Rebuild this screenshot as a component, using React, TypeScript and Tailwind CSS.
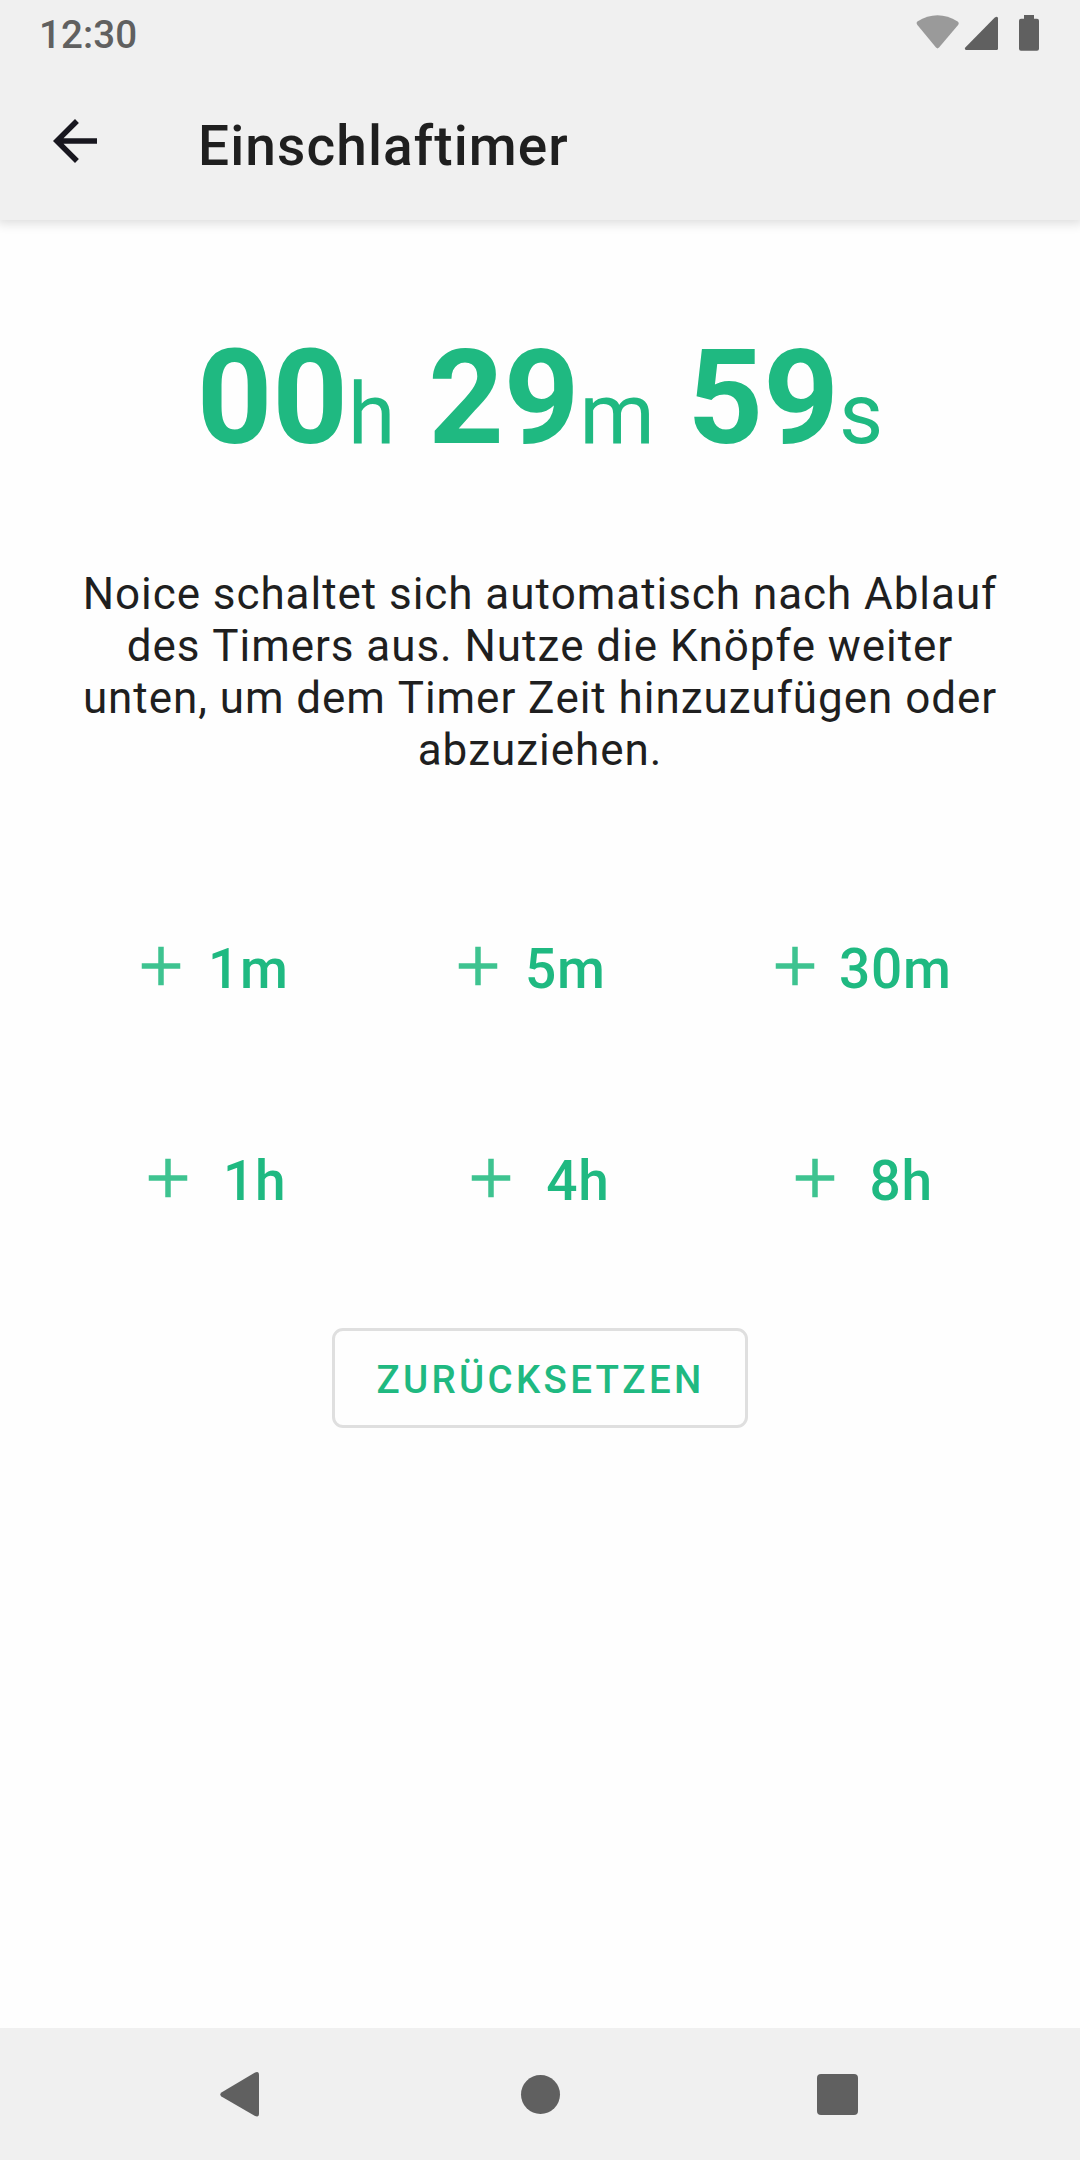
const ROWS = [
  {
    cls: "pl-[128px]",
    cell: "w-[317px]",
    items: [
      { label: "1m", gap: "pl-[14px]" },
      { label: "5m", gap: "pl-[14px]" },
      { label: "30m", gap: "pl-[11px]" },
    ],
  },
  {
    cls: "pl-[135px]",
    cell: "w-[323.3px]",
    items: [
      { label: "1h", gap: "pl-[22px]" },
      { label: "4h", gap: "pl-[22px]" },
      { label: "8h", gap: "pl-[22px]" },
    ],
  },
];

function StatusBar() {
  return (
    <div className="flex h-[66px] items-start justify-between pl-[39px] text-[#606060]">
      <span className="mt-[12px] text-[38.5px] leading-[46px] font-medium tracking-[0.1px]">12:30</span>
      <svg className="h-[66px] w-[180px]" viewBox="900 0 180 66" fill="currentColor">
        <path
          d="M917.3 21.4Q937.5 9.3 957.7 21.4Q959.6 22.8 958.3 24.8L939 47.6Q937.5 49.2 936 47.6L917.2 24.8Q915.8 22.8 917.3 21.4Z"
          fill="#9a9a9a"
        />
        <path d="M965.3 47.6L994.8 17.6Q998 15.6 998 18.6V48.5Q998 50 996.5 50H966Q964 49.6 965.3 47.6Z" />
        <path d="M1024 15H1034V18.7H1037Q1039 18.7 1039 20.7V48.8Q1039 50.8 1037 50.8H1021Q1019 50.8 1019 48.8V20.7Q1019 18.7 1021 18.7H1024Z" />
      </svg>
    </div>
  );
}

function PlusIcon() {
  return (
    <svg className="h-[66px] w-[66px] shrink-0" viewBox="0 0 24 24" fill="#3ec390">
      <path d="M19 13h-6v6h-2v-6H5v-2h6V5h2v6h6v2z" />
    </svg>
  );
}

function TimePart({ value, unit }: { value: string; unit: string }) {
  return (
    <>
      <span className="font-bold">{value}</span>
      <span className="text-[85.8px]">{unit}</span>
    </>
  );
}

export default function App() {
  return (
    <div className="flex h-[2160px] w-[1080px] flex-col overflow-hidden bg-[#fefefe] font-['Roboto',sans-serif] text-[#1f1f1f]">
      <header className="z-10 h-[220px] shrink-0 bg-[#f0f0f0] shadow-[0_0_11px_3px_rgba(0,0,0,0.14)]">
        <StatusBar />
        <div className="flex h-[154px] items-start pl-[42px]">
          <svg className="mt-[42px] h-[66px] w-[66px]" viewBox="0 0 24 24" fill="#18171f">
            <path d="M20 11H7.83l5.59-5.59L12 4l-8 8 8 8 1.41-1.41L7.83 13H20v-2z" />
          </svg>
          <h1 className="mt-[48px] ml-[90px] text-[55px] leading-[64px] font-medium tracking-[1.1px]">
            Einschlaftimer
          </h1>
        </div>
      </header>

      <main className="flex grow flex-col items-center">
        <div className="mt-[100px] h-[156px] text-[132px] leading-[156px] whitespace-nowrap text-[#1fb981]">
          <TimePart value="00" unit="h" /> <TimePart value="29" unit="m" />{" "}
          <TimePart value="59" unit="s" />
        </div>

        <p className="mt-[92px] text-center text-[44px] leading-[52px] tracking-[0.95px] [font-kerning:none]">
          Noice schaltet sich automatisch nach Ablauf
          <br />
          des Timers aus. Nutze die Knöpfe weiter
          <br />
          unten, um dem Timer Zeit hinzuzufügen oder
          <br />
          abzuziehen.
        </p>

        <div className="mt-[157px] flex w-full flex-col gap-[146px]">
          {ROWS.map((row) => (
            <div key={row.cls} className={`flex ${row.cls}`}>
              {row.items.map((item) => (
                <button key={item.label} className={`flex h-[66px] shrink-0 items-center ${row.cell}`}>
                  <PlusIcon />
                  <span
                    className={`pt-[6px] text-[55px] leading-[64px] font-medium tracking-[0.0125em] text-[#1fb981] ${item.gap}`}
                  >
                    {item.label}
                  </span>
                </button>
              ))}
            </div>
          ))}
        </div>

        <button className="mt-[117px] flex h-[100px] w-[416px] items-center justify-center rounded-[11px] border-[3px] border-[#dfdfdf] pt-[4px] pl-px text-[38.5px] leading-[46px] font-medium tracking-[3.31px] text-[#1fb981]">
          ZURÜCKSETZEN
        </button>
      </main>

      <nav className="flex h-[132px] shrink-0 items-center bg-[#f0f0f0] pl-[220px]">
        <svg className="h-[46px] w-[40px]" viewBox="0 0 40 46" fill="#606060">
          <path d="M1.4 21.4L34.6 1.8Q39 -.4 39 4V42.6Q39 47 34.6 44.8L1.4 25.4Q-.8 23.4 1.4 21.4Z" />
        </svg>
        <div className="ml-[261px] h-[39px] w-[39px] rounded-full bg-[#606060]" />
        <div className="ml-[257px] h-[41px] w-[41px] rounded-[4px] bg-[#606060]" />
      </nav>
    </div>
  );
}
